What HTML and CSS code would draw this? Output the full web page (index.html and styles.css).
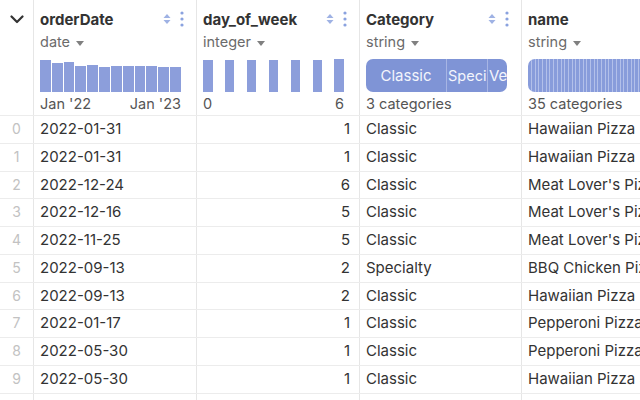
FILE: index.html
```html
<!DOCTYPE html>
<html>
<head>
<meta charset="utf-8">
<link rel="stylesheet" href="styles.css">
</head>
<body>
<div class="table">
  <div class="row head">
    <div class="cell idx chev">
      <svg width="14" height="9" viewBox="0 0 14 9"><polyline points="1.5,1.5 7,7 12.5,1.5" fill="none" stroke="#333" stroke-width="2.2" stroke-linecap="round" stroke-linejoin="round"/></svg>
    </div>
    <div class="cell hcol">
      <div class="title"><span>orderDate</span>
        <span class="icons">
          <svg class="sort" width="8" height="12" viewBox="0 0 8 12"><path d="M4 1 L7.5 5 H0.5 Z M4 11 L7.5 7 H0.5 Z" fill="#9fb2e4"/></svg>
          <svg class="kebab" width="4" height="16" viewBox="0 0 4 16"><circle cx="2" cy="2" r="1.6" fill="#8aa2df"/><circle cx="2" cy="8" r="1.6" fill="#8aa2df"/><circle cx="2" cy="14" r="1.6" fill="#8aa2df"/></svg>
        </span>
      </div>
      <div class="type">date <span class="caret"></span></div>
      <div class="hist dates">
        <div class="bar" style="height:32px"></div>
        <div class="bar" style="height:29px"></div>
        <div class="bar" style="height:30px"></div>
        <div class="bar" style="height:26.5px"></div>
        <div class="bar" style="height:27.5px"></div>
        <div class="bar" style="height:25.5px"></div>
        <div class="bar" style="height:26.5px"></div>
        <div class="bar" style="height:26.5px"></div>
        <div class="bar" style="height:26.5px"></div>
        <div class="bar" style="height:26.5px"></div>
        <div class="bar" style="height:25px"></div>
        <div class="bar" style="height:25px"></div>
      </div>
      <div class="axis"><span>Jan '22</span><span>Jan '23</span></div>
    </div>
    <div class="cell hcol">
      <div class="title"><span>day_of_week</span>
        <span class="icons">
          <svg class="sort" width="8" height="12" viewBox="0 0 8 12"><path d="M4 1 L7.5 5 H0.5 Z M4 11 L7.5 7 H0.5 Z" fill="#9fb2e4"/></svg>
          <svg class="kebab" width="4" height="16" viewBox="0 0 4 16"><circle cx="2" cy="2" r="1.6" fill="#8aa2df"/><circle cx="2" cy="8" r="1.6" fill="#8aa2df"/><circle cx="2" cy="14" r="1.6" fill="#8aa2df"/></svg>
        </span>
      </div>
      <div class="type">integer <span class="caret"></span></div>
      <div class="hist days">
        <div class="bar" style="height:32px"></div>
        <div class="bar" style="height:32px"></div>
        <div class="bar" style="height:32px"></div>
        <div class="bar" style="height:32px"></div>
        <div class="bar" style="height:32px"></div>
        <div class="bar" style="height:32px"></div>
        <div class="bar" style="height:33px"></div>
      </div>
      <div class="axis"><span>0</span><span>6</span></div>
    </div>
    <div class="cell hcol">
      <div class="title"><span>Category</span>
        <span class="icons">
          <svg class="sort" width="8" height="12" viewBox="0 0 8 12"><path d="M4 1 L7.5 5 H0.5 Z M4 11 L7.5 7 H0.5 Z" fill="#9fb2e4"/></svg>
          <svg class="kebab" width="4" height="16" viewBox="0 0 4 16"><circle cx="2" cy="2" r="1.6" fill="#8aa2df"/><circle cx="2" cy="8" r="1.6" fill="#8aa2df"/><circle cx="2" cy="14" r="1.6" fill="#8aa2df"/></svg>
        </span>
      </div>
      <div class="type">string <span class="caret"></span></div>
      <div class="chip cats">
        <div class="seg" style="width:81px">Classic</div>
        <div class="seg" style="width:41px">Speci</div>
        <div class="seg" style="width:19px">Ve</div>
      </div>
      <div class="axis"><span>3 categories</span></div>
    </div>
    <div class="cell hcol last">
      <div class="title"><span>name</span></div>
      <div class="type">string <span class="caret"></span></div>
      <div class="chip names">
        <div class="stripe"></div><div class="stripe"></div><div class="stripe"></div><div class="stripe"></div><div class="stripe"></div>
        <div class="stripe"></div><div class="stripe"></div><div class="stripe"></div><div class="stripe"></div><div class="stripe"></div>
        <div class="stripe"></div><div class="stripe"></div><div class="stripe"></div><div class="stripe"></div><div class="stripe"></div>
        <div class="stripe"></div><div class="stripe"></div><div class="stripe"></div><div class="stripe"></div><div class="stripe"></div>
        <div class="stripe"></div><div class="stripe"></div><div class="stripe"></div><div class="stripe"></div><div class="stripe"></div>
        <div class="stripe"></div><div class="stripe"></div><div class="stripe"></div><div class="stripe"></div><div class="stripe"></div>
        <div class="stripe"></div><div class="stripe"></div><div class="stripe"></div><div class="stripe"></div><div class="stripe"></div>
      </div>
      <div class="axis"><span>35 categories</span></div>
    </div>
  </div>

  <div class="row"><div class="cell idx">0</div><div class="cell">2022-01-31</div><div class="cell num">1</div><div class="cell">Classic</div><div class="cell last">Hawaiian Pizza M</div></div>
  <div class="row"><div class="cell idx">1</div><div class="cell">2022-01-31</div><div class="cell num">1</div><div class="cell">Classic</div><div class="cell last">Hawaiian Pizza L</div></div>
  <div class="row"><div class="cell idx">2</div><div class="cell">2022-12-24</div><div class="cell num">6</div><div class="cell">Classic</div><div class="cell last">Meat Lover's Pizza</div></div>
  <div class="row"><div class="cell idx">3</div><div class="cell">2022-12-16</div><div class="cell num">5</div><div class="cell">Classic</div><div class="cell last">Meat Lover's Pizza</div></div>
  <div class="row"><div class="cell idx">4</div><div class="cell">2022-11-25</div><div class="cell num">5</div><div class="cell">Classic</div><div class="cell last">Meat Lover's Pizza</div></div>
  <div class="row"><div class="cell idx">5</div><div class="cell">2022-09-13</div><div class="cell num">2</div><div class="cell">Specialty</div><div class="cell last">BBQ Chicken Pizza</div></div>
  <div class="row"><div class="cell idx">6</div><div class="cell">2022-09-13</div><div class="cell num">2</div><div class="cell">Classic</div><div class="cell last">Hawaiian Pizza L</div></div>
  <div class="row"><div class="cell idx">7</div><div class="cell">2022-01-17</div><div class="cell num">1</div><div class="cell">Classic</div><div class="cell last">Pepperoni Pizza</div></div>
  <div class="row"><div class="cell idx">8</div><div class="cell">2022-05-30</div><div class="cell num">1</div><div class="cell">Classic</div><div class="cell last">Pepperoni Pizza</div></div>
  <div class="row"><div class="cell idx">9</div><div class="cell">2022-05-30</div><div class="cell num">1</div><div class="cell">Classic</div><div class="cell last">Hawaiian Pizza S</div></div>
  <div class="row"><div class="cell idx">10</div><div class="cell">2022-03-04</div><div class="cell num">4</div><div class="cell">Classic</div><div class="cell last">Pepperoni Pizza</div></div>
</div>
</body>
</html>
```
FILE: styles.css
```css
* { box-sizing: border-box; }
html, body { margin: 0; padding: 0; background: #fff; }
body {
  width: 640px;
  height: 400px;
  overflow: hidden;
  font-family: Inter, "Noto Sans", sans-serif;
  color: #333;
}
.table { width: 720px; }
.row {
  display: flex;
  height: 27.75px;
  border-bottom: 1px solid #ececec;
}
.row.head { height: 116px; }
.cell {
  flex: none;
  width: 163px;
  border-right: 1px solid #e6e6e6;
  padding: 0 6px;
  font-size: 15px;
  line-height: 26px;
  white-space: nowrap;
  overflow: hidden;
}
.cell:nth-child(4) { width: 162px; }
.cell.last { width: 200px; border-right: none; }
.cell.idx {
  width: 34px;
  padding: 0;
  text-align: center;
  color: #c2c2c2;
  font-size: 14px;
}
.cell.num { text-align: right; padding-right: 9px; }
.chev { display: flex; justify-content: center; padding-top: 15px !important; line-height: 0 !important; }
.chev svg { margin-left: 1px; }
.hcol { padding: 8px 6px 0 6px; line-height: normal; }
.title {
  display: flex;
  justify-content: space-between;
  align-items: center;
  height: 22px;
  font-weight: 700;
  font-size: 15px;
  color: #333;
}
.icons { display: flex; align-items: center; gap: 8px; padding-right: 6px; }
.sort { margin-right: 1px; }
.type {
  height: 22px;
  line-height: 22px;
  font-size: 14.5px;
  color: #6b6b6b;
  margin-top: 1px;
}
.caret {
  display: inline-block;
  width: 0; height: 0;
  border-left: 4px solid transparent;
  border-right: 4px solid transparent;
  border-top: 5px solid #808080;
  vertical-align: middle;
  margin-left: 2px;
}
.hist {
  display: flex;
  align-items: flex-end;
  height: 33px;
  margin-top: 6px;
}
.hist.dates { gap: 1px; width: 141px; }
.hist.dates .bar { flex: 1; background: #8c9edb; }
.hist.days { justify-content: space-between; width: 141px; }
.hist.days .bar { width: 9.5px; background: #8c9edb; }
.axis {
  display: flex;
  justify-content: space-between;
  width: 141px;
  font-size: 14.5px;
  color: #555;
  margin-top: 1px;
  height: 22px;
  line-height: 22px;
}
.chip {
  display: flex;
  height: 33px;
  margin-top: 6px;
  border-radius: 7px;
  overflow: hidden;
  background: #7f94d6;
}
.cats { width: 141px; }
.cats .seg {
  flex: none;
  color: #f3f5fc;
  font-size: 15px;
  line-height: 33px;
  text-align: center;
  overflow: hidden;
  white-space: nowrap;
  border-right: 1px solid #a7b5e4;
}
.cats .seg:nth-child(2) { text-align: left; padding-left: 1px; font-size: 14.5px; }
.cats .seg:nth-child(3) { text-align: left; padding-left: 1px; border-right: none; }
.names { width: 135px; background: #889cdb; }
.names .stripe {
  flex: none;
  width: 3.7px;
  height: 100%;
  border-right: 1px solid #b3c0ea;
}
.names .stripe:first-child { width: 4px; }
```
